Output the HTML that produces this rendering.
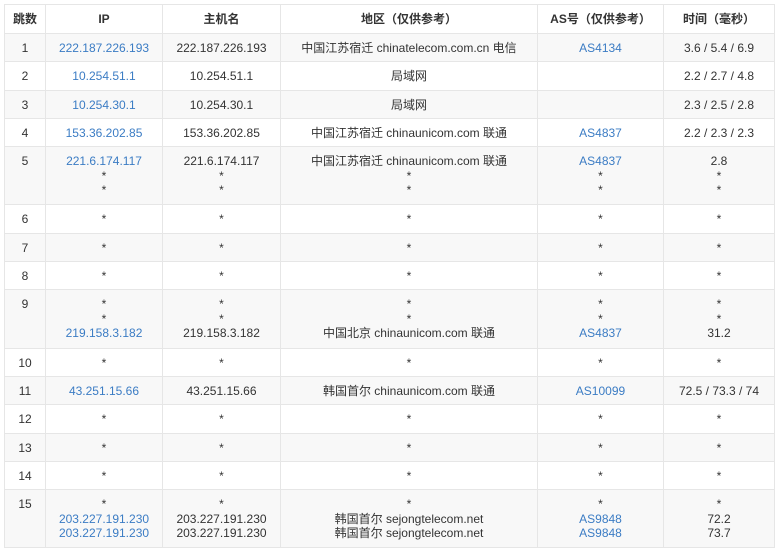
<!DOCTYPE html>
<html><head><meta charset="utf-8"><style>
body{margin:0;background:#fff;font-family:"Liberation Sans","Noto Sans CJK SC",sans-serif;font-size:12px;color:#333;}
table{position:absolute;left:4px;top:4px;border-collapse:collapse;table-layout:fixed;width:770px;}
td,th{border:1px solid #e6e6e6;text-align:center;vertical-align:top;padding:7px 2px 0 2px;line-height:14.5px;box-sizing:border-box;overflow:hidden;white-space:nowrap;}
th{font-weight:bold;height:29px;padding-top:7px;}
tbody tr:nth-child(odd){background:#f8f8f8;}
tr.s td{height:28.3px;}
tr.m td{height:58.3px;}
.b{color:#3b7cc4;}
</style></head><body>
<table>
<colgroup><col style="width:41px"><col style="width:117px"><col style="width:118px"><col style="width:257px"><col style="width:126px"><col style="width:111px"></colgroup>
<thead><tr><th>跳数</th><th>IP</th><th>主机名</th><th>地区（仅供参考）</th><th>AS号（仅供参考）</th><th>时间（毫秒）</th></tr></thead>
<tbody>
<tr class="s"><td>1</td><td class="b">222.187.226.193</td><td>222.187.226.193</td><td>中国江苏宿迁 chinatelecom.com.cn 电信</td><td class="b">AS4134</td><td>3.6 / 5.4 / 6.9</td></tr>
<tr class="s"><td>2</td><td class="b">10.254.51.1</td><td>10.254.51.1</td><td>局域网</td><td></td><td>2.2 / 2.7 / 4.8</td></tr>
<tr class="s"><td>3</td><td class="b">10.254.30.1</td><td>10.254.30.1</td><td>局域网</td><td></td><td>2.3 / 2.5 / 2.8</td></tr>
<tr class="s"><td>4</td><td class="b">153.36.202.85</td><td>153.36.202.85</td><td>中国江苏宿迁 chinaunicom.com 联通</td><td class="b">AS4837</td><td>2.2 / 2.3 / 2.3</td></tr>
<tr class="m"><td>5</td><td><span class="b">221.6.174.117</span><br>*<br>*</td><td>221.6.174.117<br>*<br>*</td><td>中国江苏宿迁 chinaunicom.com 联通<br>*<br>*</td><td><span class="b">AS4837</span><br>*<br>*</td><td>2.8<br>*<br>*</td></tr>
<tr class="s"><td>6</td><td>*</td><td>*</td><td>*</td><td>*</td><td>*</td></tr>
<tr class="s"><td>7</td><td>*</td><td>*</td><td>*</td><td>*</td><td>*</td></tr>
<tr class="s"><td>8</td><td>*</td><td>*</td><td>*</td><td>*</td><td>*</td></tr>
<tr class="m"><td>9</td><td>*<br>*<br><span class="b">219.158.3.182</span></td><td>*<br>*<br>219.158.3.182</td><td>*<br>*<br>中国北京 chinaunicom.com 联通</td><td>*<br>*<br><span class="b">AS4837</span></td><td>*<br>*<br>31.2</td></tr>
<tr class="s"><td>10</td><td>*</td><td>*</td><td>*</td><td>*</td><td>*</td></tr>
<tr class="s"><td>11</td><td class="b">43.251.15.66</td><td>43.251.15.66</td><td>韩国首尔 chinaunicom.com 联通</td><td class="b">AS10099</td><td>72.5 / 73.3 / 74</td></tr>
<tr class="s"><td>12</td><td>*</td><td>*</td><td>*</td><td>*</td><td>*</td></tr>
<tr class="s"><td>13</td><td>*</td><td>*</td><td>*</td><td>*</td><td>*</td></tr>
<tr class="s"><td>14</td><td>*</td><td>*</td><td>*</td><td>*</td><td>*</td></tr>
<tr class="m"><td>15</td><td>*<br><span class="b">203.227.191.230</span><br><span class="b">203.227.191.230</span></td><td>*<br>203.227.191.230<br>203.227.191.230</td><td>*<br>韩国首尔 sejongtelecom.net<br>韩国首尔 sejongtelecom.net</td><td>*<br><span class="b">AS9848</span><br><span class="b">AS9848</span></td><td>*<br>72.2<br>73.7</td></tr>
</tbody></table>
</body></html>
